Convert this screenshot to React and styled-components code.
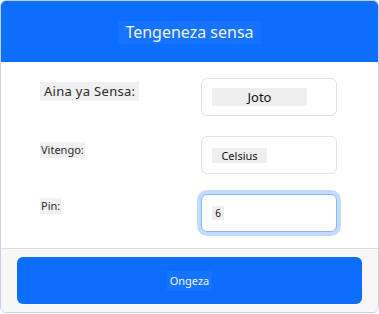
import React from "react";
import styled, { createGlobalStyle } from "styled-components";

const GlobalStyle = createGlobalStyle`
  html, body {
    margin: 0;
    padding: 0;
    background: #fff;
    font-family: "Noto Sans", "Open Sans", sans-serif;
  }
`;

const fields = [
  { label: "Aina ya Sensa:", value: "Joto", labelSize: 13, spacing: 0.3, valueSize: 13, valueWidth: 95, offset: 4 },
  { label: "Vitengo:", value: "Celsius", labelSize: 11, spacing: 0, valueSize: 11, valueWidth: 55, offset: 6 },
  { label: "Pin:", value: "6", labelSize: 11, spacing: 0, valueSize: 10, valueWidth: 12, offset: 4, focused: true },
];

const App = () => {
  return (
    <>
      <GlobalStyle />
      <Card>
        <Header>
          <Title>Tengeneza sensa</Title>
        </Header>
        <Body>
          {fields.map((f) => (
            <React.Fragment key={f.label}>
              <Label $size={f.labelSize} $spacing={f.spacing} $offset={f.offset}>
                {f.label}
              </Label>
              <Field $focused={f.focused}>
                <Value $size={f.valueSize} $width={f.valueWidth}>
                  {f.value}
                </Value>
              </Field>
            </React.Fragment>
          ))}
        </Body>
        <Footer>
          <SubmitButton>
            <span>Ongeza</span>
          </SubmitButton>
        </Footer>
      </Card>
    </>
  );
};

export default App;

const Card = styled.div`
  width: 379px;
  box-sizing: border-box;
  border: 1px solid #c3d2e8;
  border-radius: 6px;
  overflow: hidden;
  background: #fff;
`;

const Header = styled.div`
  height: 61px;
  background: #0d6efd;
  display: flex;
  align-items: center;
  justify-content: center;
`;

const Title = styled.span`
  font-size: 16px;
  font-weight: 400;
  line-height: 23px;
  padding: 0 7px;
  color: #eef4ff;
  background: rgba(255, 255, 255, 0.04);
  margin-top: 2px;
`;

const Body = styled.div`
  display: grid;
  grid-template-columns: 1fr 136px;
  row-gap: 20px;
  padding: 16px 41px 16px 39px;
`;

const Label = styled.span`
  justify-self: start;
  align-self: start;
  margin-top: ${(p) => p.$offset}px;
  font-size: ${(p) => p.$size}px;
  letter-spacing: ${(p) => p.$spacing}px;
  line-height: 1.45;
  padding: 0 ${(p) => (p.$size > 12 ? 4 : 1)}px;
  color: #2b2b2b;
  background: #f0f0f0;
`;

const Field = styled.div`
  height: 38px;
  box-sizing: border-box;
  display: flex;
  align-items: center;
  padding: 0 10px;
  border: 1px solid ${(p) => (p.$focused ? "#86b7fe" : "#dee2e6")};
  border-radius: 6px;
  box-shadow: ${(p) => (p.$focused ? "0 0 0 4px rgba(13, 110, 253, 0.25)" : "none")};
  background: #fff;
`;

const Value = styled.span`
  width: ${(p) => p.$width}px;
  text-align: center;
  font-size: ${(p) => p.$size}px;
  line-height: ${(p) => Math.round(p.$size * 1.4)}px;
  color: #111;
  background: #efefef;
`;

const Footer = styled.div`
  border-top: 1px solid #d9dce0;
  background: #f7f7f7;
  padding: 8px 16px;
`;

const SubmitButton = styled.button`
  width: 100%;
  height: 47px;
  border: none;
  border-radius: 6px;
  background: #0d6efd;
  display: flex;
  align-items: center;
  justify-content: center;
  font-family: "Noto Sans", sans-serif;

  span {
    font-size: 11px;
    line-height: 20px;
    padding: 0 3px;
    color: #eef4ff;
    background: rgba(255, 255, 255, 0.04);
  }
`;
